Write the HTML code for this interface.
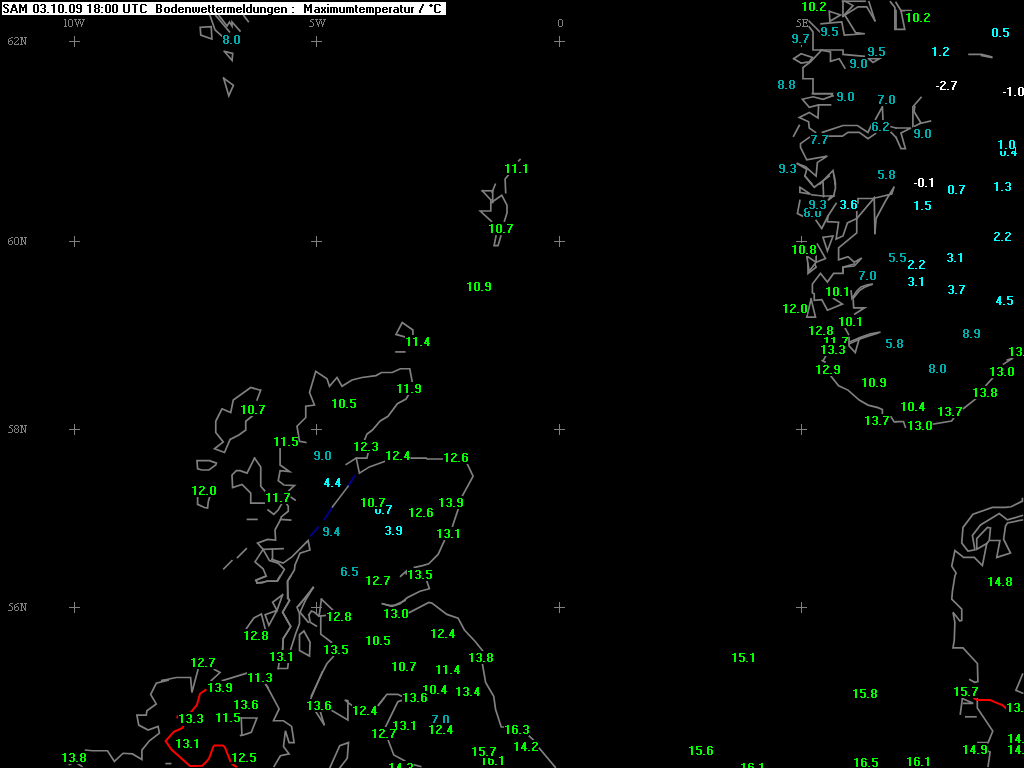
<!DOCTYPE html>
<html><head><meta charset="utf-8"><style>
html,body{margin:0;padding:0;background:#000;width:1024px;height:768px;overflow:hidden}
svg{display:block;will-change:transform}
.c{fill:none;stroke:#808080;stroke-width:1.7;stroke-linejoin:miter;stroke-linecap:square}
.g{font-family:"Liberation Sans",sans-serif;font-weight:bold;font-size:12px;letter-spacing:0.5px;fill:#00ff00}
.t{font-family:"Liberation Sans",sans-serif;font-weight:bold;font-size:12px;letter-spacing:0.5px;fill:#10b4b4}
.y{font-family:"Liberation Sans",sans-serif;font-weight:bold;font-size:12px;letter-spacing:0.5px;fill:#00ffff}
.w{font-family:"Liberation Sans",sans-serif;font-weight:bold;font-size:12px;letter-spacing:0.5px;fill:#ffffff}
.lab{font-family:"Liberation Serif",serif;font-size:11px;fill:#8c8c8c}
</style></head><body>
<svg width="1024" height="768" viewBox="0 0 1024 768">
<rect x="0" y="0" width="1024" height="768" fill="#000"/>

<rect x="2" y="2" width="444" height="13" fill="#fff"/>
<defs><path id="g0" d="M1,0h4v1h-4zM0,1h2v1h-2zM4,1h2v1h-2zM0,2h2v1h-2zM4,2h2v1h-2zM0,3h2v1h-2zM4,3h2v1h-2zM0,4h2v1h-2zM4,4h2v1h-2zM0,5h2v1h-2zM4,5h2v1h-2zM0,6h2v1h-2zM4,6h2v1h-2zM0,7h2v1h-2zM4,7h2v1h-2zM1,8h4v1h-4z"/><path id="g1" d="M2,0h2v1h-2zM0,1h4v1h-4zM2,2h2v1h-2zM2,3h2v1h-2zM2,4h2v1h-2zM2,5h2v1h-2zM2,6h2v1h-2zM2,7h2v1h-2zM2,8h2v1h-2z"/><path id="g2" d="M1,0h4v1h-4zM0,1h2v1h-2zM4,1h2v1h-2zM4,2h2v1h-2zM3,3h2v1h-2zM2,4h2v1h-2zM1,5h2v1h-2zM0,6h2v1h-2zM0,7h2v1h-2zM0,8h6v1h-6z"/><path id="g3" d="M1,0h4v1h-4zM0,1h2v1h-2zM4,1h2v1h-2zM4,2h2v1h-2zM4,3h2v1h-2zM2,4h3v1h-3zM4,5h2v1h-2zM4,6h2v1h-2zM0,7h2v1h-2zM4,7h2v1h-2zM1,8h4v1h-4z"/><path id="g4" d="M3,0h2v1h-2zM2,1h3v1h-3zM2,2h3v1h-3zM1,3h4v1h-4zM1,4h4v1h-4zM0,5h2v1h-2zM3,5h2v1h-2zM0,6h6v1h-6zM3,7h2v1h-2zM3,8h2v1h-2z"/><path id="g5" d="M0,0h6v1h-6zM0,1h2v1h-2zM0,2h2v1h-2zM0,3h5v1h-5zM4,4h2v1h-2zM4,5h2v1h-2zM4,6h2v1h-2zM0,7h2v1h-2zM4,7h2v1h-2zM1,8h4v1h-4z"/><path id="g6" d="M1,0h4v1h-4zM0,1h2v1h-2zM4,1h2v1h-2zM0,2h2v1h-2zM0,3h5v1h-5zM0,4h2v1h-2zM4,4h2v1h-2zM0,5h2v1h-2zM4,5h2v1h-2zM0,6h2v1h-2zM4,6h2v1h-2zM0,7h2v1h-2zM4,7h2v1h-2zM1,8h4v1h-4z"/><path id="g7" d="M0,0h6v1h-6zM4,1h2v1h-2zM3,2h2v1h-2zM3,3h2v1h-2zM2,4h2v1h-2zM2,5h2v1h-2zM1,6h2v1h-2zM1,7h2v1h-2zM1,8h2v1h-2z"/><path id="g8" d="M1,0h4v1h-4zM0,1h2v1h-2zM4,1h2v1h-2zM0,2h2v1h-2zM4,2h2v1h-2zM0,3h2v1h-2zM4,3h2v1h-2zM1,4h4v1h-4zM0,5h2v1h-2zM4,5h2v1h-2zM0,6h2v1h-2zM4,6h2v1h-2zM0,7h2v1h-2zM4,7h2v1h-2zM1,8h4v1h-4z"/><path id="g9" d="M1,0h4v1h-4zM0,1h2v1h-2zM4,1h2v1h-2zM0,2h2v1h-2zM4,2h2v1h-2zM0,3h2v1h-2zM4,3h2v1h-2zM1,4h5v1h-5zM4,5h2v1h-2zM4,6h2v1h-2zM0,7h2v1h-2zM4,7h2v1h-2zM1,8h4v1h-4z"/><path id="gdot" d="M0,8h2v1h-2z"/><path id="gmin" d="M0,5h3v1h-3z"/></defs>
<defs><path id="tS" d="M1,0h4v1h-4zM0,1h2v1h-2zM4,1h2v1h-2zM0,2h2v1h-2zM1,3h3v1h-3zM2,4h3v1h-3zM4,5h2v1h-2zM4,6h2v1h-2zM0,7h2v1h-2zM4,7h2v1h-2zM1,8h4v1h-4z"/><path id="tA" d="M3,0h2v1h-2zM2,1h4v1h-4zM2,2h4v1h-4zM2,3h4v1h-4zM1,4h2v1h-2zM5,4h2v1h-2zM1,5h2v1h-2zM5,5h2v1h-2zM1,6h6v1h-6zM0,7h2v1h-2zM6,7h2v1h-2zM0,8h2v1h-2zM6,8h2v1h-2z"/><path id="tM" d="M0,0h2v1h-2zM6,0h2v1h-2zM0,1h3v1h-3zM5,1h3v1h-3zM0,2h3v1h-3zM5,2h3v1h-3zM0,3h8v1h-8zM0,4h2v1h-2zM3,4h2v1h-2zM6,4h2v1h-2zM0,5h2v1h-2zM3,5h2v1h-2zM6,5h2v1h-2zM0,6h2v1h-2zM3,6h2v1h-2zM6,6h2v1h-2zM0,7h2v1h-2zM6,7h2v1h-2zM0,8h2v1h-2zM6,8h2v1h-2z"/><path id="tU" d="M0,0h2v1h-2zM5,0h2v1h-2zM0,1h2v1h-2zM5,1h2v1h-2zM0,2h2v1h-2zM5,2h2v1h-2zM0,3h2v1h-2zM5,3h2v1h-2zM0,4h2v1h-2zM5,4h2v1h-2zM0,5h2v1h-2zM5,5h2v1h-2zM0,6h2v1h-2zM5,6h2v1h-2zM0,7h2v1h-2zM5,7h2v1h-2zM1,8h5v1h-5z"/><path id="tT" d="M0,0h6v1h-6zM2,1h2v1h-2zM2,2h2v1h-2zM2,3h2v1h-2zM2,4h2v1h-2zM2,5h2v1h-2zM2,6h2v1h-2zM2,7h2v1h-2zM2,8h2v1h-2z"/><path id="tC" d="M1,0h5v1h-5zM0,1h2v1h-2zM5,1h2v1h-2zM0,2h2v1h-2zM0,3h2v1h-2zM0,4h2v1h-2zM0,5h2v1h-2zM0,6h2v1h-2zM0,7h2v1h-2zM5,7h2v1h-2zM1,8h5v1h-5z"/><path id="tB" d="M0,0h5v1h-5zM0,1h2v1h-2zM4,1h2v1h-2zM0,2h2v1h-2zM4,2h2v1h-2zM0,3h2v1h-2zM4,3h2v1h-2zM0,4h5v1h-5zM0,5h2v1h-2zM4,5h2v1h-2zM0,6h2v1h-2zM4,6h2v1h-2zM0,7h2v1h-2zM4,7h2v1h-2zM0,8h5v1h-5z"/><path id="to" d="M1,3h4v1h-4zM0,4h2v1h-2zM4,4h2v1h-2zM0,5h2v1h-2zM4,5h2v1h-2zM0,6h2v1h-2zM4,6h2v1h-2zM0,7h2v1h-2zM4,7h2v1h-2zM1,8h4v1h-4z"/><path id="td" d="M4,0h2v1h-2zM4,1h2v1h-2zM4,2h2v1h-2zM1,3h5v1h-5zM0,4h2v1h-2zM4,4h2v1h-2zM0,5h2v1h-2zM4,5h2v1h-2zM0,6h2v1h-2zM4,6h2v1h-2zM0,7h2v1h-2zM4,7h2v1h-2zM1,8h5v1h-5z"/><path id="te" d="M1,3h4v1h-4zM0,4h2v1h-2zM4,4h2v1h-2zM0,5h6v1h-6zM0,6h2v1h-2zM0,7h2v1h-2zM4,7h2v1h-2zM1,8h4v1h-4z"/><path id="tn" d="M0,3h5v1h-5zM0,4h2v1h-2zM4,4h2v1h-2zM0,5h2v1h-2zM4,5h2v1h-2zM0,6h2v1h-2zM4,6h2v1h-2zM0,7h2v1h-2zM4,7h2v1h-2zM0,8h2v1h-2zM4,8h2v1h-2z"/><path id="tw" d="M0,3h2v1h-2zM3,3h2v1h-2zM6,3h2v1h-2zM0,4h2v1h-2zM3,4h2v1h-2zM6,4h2v1h-2zM0,5h2v1h-2zM3,5h2v1h-2zM6,5h2v1h-2zM0,6h2v1h-2zM3,6h2v1h-2zM6,6h2v1h-2zM0,7h2v1h-2zM3,7h2v1h-2zM6,7h2v1h-2zM1,8h2v1h-2zM5,8h2v1h-2z"/><path id="tt" d="M0,1h2v1h-2zM0,2h2v1h-2zM0,3h3v1h-3zM0,4h2v1h-2zM0,5h2v1h-2zM0,6h2v1h-2zM0,7h2v1h-2zM1,8h2v1h-2z"/><path id="tr" d="M0,3h3v1h-3zM0,4h2v1h-2zM0,5h2v1h-2zM0,6h2v1h-2zM0,7h2v1h-2zM0,8h2v1h-2z"/><path id="tm" d="M0,3h7v1h-7zM0,4h2v1h-2zM3,4h2v1h-2zM6,4h2v1h-2zM0,5h2v1h-2zM3,5h2v1h-2zM6,5h2v1h-2zM0,6h2v1h-2zM3,6h2v1h-2zM6,6h2v1h-2zM0,7h2v1h-2zM3,7h2v1h-2zM6,7h2v1h-2zM0,8h2v1h-2zM3,8h2v1h-2zM6,8h2v1h-2z"/><path id="tl" d="M0,0h2v1h-2zM0,1h2v1h-2zM0,2h2v1h-2zM0,3h2v1h-2zM0,4h2v1h-2zM0,5h2v1h-2zM0,6h2v1h-2zM0,7h2v1h-2zM0,8h2v1h-2z"/><path id="tu" d="M0,3h2v1h-2zM4,3h2v1h-2zM0,4h2v1h-2zM4,4h2v1h-2zM0,5h2v1h-2zM4,5h2v1h-2zM0,6h2v1h-2zM4,6h2v1h-2zM0,7h2v1h-2zM4,7h2v1h-2zM1,8h5v1h-5z"/><path id="tg" d="M1,3h5v1h-5zM0,4h2v1h-2zM4,4h2v1h-2zM0,5h2v1h-2zM4,5h2v1h-2zM0,6h2v1h-2zM4,6h2v1h-2zM0,7h2v1h-2zM4,7h2v1h-2zM1,8h5v1h-5zM4,9h2v1h-2zM1,10h4v1h-4z"/><path id="ta" d="M1,3h4v1h-4zM4,4h2v1h-2zM1,5h5v1h-5zM0,6h2v1h-2zM4,6h2v1h-2zM0,7h2v1h-2zM4,7h2v1h-2zM1,8h5v1h-5z"/><path id="tx" d="M0,3h2v1h-2zM3,3h2v1h-2zM0,4h2v1h-2zM3,4h2v1h-2zM1,5h3v1h-3zM1,6h3v1h-3zM0,7h2v1h-2zM3,7h2v1h-2zM0,8h2v1h-2zM3,8h2v1h-2z"/><path id="ti" d="M0,0h2v1h-2zM0,3h2v1h-2zM0,4h2v1h-2zM0,5h2v1h-2zM0,6h2v1h-2zM0,7h2v1h-2zM0,8h2v1h-2z"/><path id="tp" d="M0,3h5v1h-5zM0,4h2v1h-2zM4,4h2v1h-2zM0,5h2v1h-2zM4,5h2v1h-2zM0,6h2v1h-2zM4,6h2v1h-2zM0,7h2v1h-2zM4,7h2v1h-2zM0,8h5v1h-5zM0,9h2v1h-2zM0,10h2v1h-2z"/><path id="tcol" d="M0,3h2v1h-2zM0,8h2v1h-2z"/><path id="tsl" d="M3,0h2v1h-2zM3,1h2v1h-2zM2,2h2v1h-2zM2,3h2v1h-2zM1,4h2v1h-2zM1,5h2v1h-2zM0,6h2v1h-2zM0,7h2v1h-2zM0,8h2v1h-2z"/><path id="tdeg" d="M1,0h2v1h-2zM0,1h4v1h-4zM1,2h2v1h-2z"/></defs>
<g fill="#000"><use href="#tS" x="3" y="4"/><use href="#tA" x="10" y="4"/><use href="#tM" x="19" y="4"/><use href="#g0" x="33" y="4"/><use href="#g3" x="40" y="4"/><use href="#gdot" x="47" y="4"/><use href="#g1" x="51" y="4"/><use href="#g0" x="58" y="4"/><use href="#gdot" x="65" y="4"/><use href="#g0" x="69" y="4"/><use href="#g9" x="76" y="4"/><use href="#g1" x="87" y="4"/><use href="#g8" x="94" y="4"/><use href="#tcol" x="101" y="4"/><use href="#g0" x="105" y="4"/><use href="#g0" x="112" y="4"/><use href="#tU" x="123" y="4"/><use href="#tT" x="132" y="4"/><use href="#tC" x="140" y="4"/><use href="#tB" x="156" y="4"/><use href="#to" x="164" y="4"/><use href="#td" x="171" y="4"/><use href="#te" x="178" y="4"/><use href="#tn" x="185" y="4"/><use href="#tw" x="192" y="4"/><use href="#te" x="201" y="4"/><use href="#tt" x="208" y="4"/><use href="#tt" x="212" y="4"/><use href="#te" x="216" y="4"/><use href="#tr" x="223" y="4"/><use href="#tm" x="227" y="4"/><use href="#te" x="236" y="4"/><use href="#tl" x="243" y="4"/><use href="#td" x="246" y="4"/><use href="#tu" x="253" y="4"/><use href="#tn" x="260" y="4"/><use href="#tg" x="267" y="4"/><use href="#te" x="274" y="4"/><use href="#tn" x="281" y="4"/><use href="#tcol" x="292" y="4"/><use href="#tM" x="304" y="4"/><use href="#ta" x="314" y="4"/><use href="#tx" x="321" y="4"/><use href="#ti" x="327" y="4"/><use href="#tm" x="330" y="4"/><use href="#tu" x="339" y="4"/><use href="#tm" x="346" y="4"/><use href="#tt" x="355" y="4"/><use href="#te" x="359" y="4"/><use href="#tm" x="366" y="4"/><use href="#tp" x="375" y="4"/><use href="#te" x="382" y="4"/><use href="#tr" x="389" y="4"/><use href="#ta" x="393" y="4"/><use href="#tt" x="400" y="4"/><use href="#tu" x="404" y="4"/><use href="#tr" x="411" y="4"/><use href="#tsl" x="419" y="4"/><use href="#tdeg" x="429" y="4"/><use href="#tC" x="434" y="4"/></g>
<path d="M69,41.5h11M74.5,36v11M69,241.5h11M74.5,236v11M69,429.5h11M74.5,424v11M69,607.5h11M74.5,602v11M311,41.5h11M316.5,36v11M311,241.5h11M316.5,236v11M311,429.5h11M316.5,424v11M311,607.5h11M316.5,602v11M554,41.5h11M559.5,36v11M554,241.5h11M559.5,236v11M554,429.5h11M559.5,424v11M554,607.5h11M559.5,602v11M796,41.5h11M801.5,36v11M796,241.5h11M801.5,236v11M796,429.5h11M801.5,424v11M796,607.5h11M801.5,602v11" stroke="#808080" stroke-width="1" fill="none"/>
<defs><path id="l6" d="M3,0h2v1h-2zM1,1h2v1h-2zM0,2h1v1h-1zM0,3h1v1h-1zM2,3h2v1h-2zM0,4h2v1h-2zM4,4h1v1h-1zM0,5h1v1h-1zM4,5h1v1h-1zM0,6h1v1h-1zM4,6h1v1h-1zM1,7h3v1h-3z"/><path id="l2" d="M1,0h3v1h-3zM0,1h1v1h-1zM4,1h1v1h-1zM4,2h1v1h-1zM3,3h1v1h-1zM2,4h1v1h-1zM1,5h1v1h-1zM0,6h1v1h-1zM4,6h1v1h-1zM0,7h5v1h-5z"/><path id="lN" d="M0,0h3v1h-3zM4,0h3v1h-3zM1,1h2v1h-2zM5,1h1v1h-1zM1,2h2v1h-2zM5,2h1v1h-1zM1,3h1v1h-1zM3,3h1v1h-1zM5,3h1v1h-1zM1,4h1v1h-1zM3,4h1v1h-1zM5,4h1v1h-1zM1,5h1v1h-1zM4,5h2v1h-2zM1,6h1v1h-1zM4,6h2v1h-2zM0,7h3v1h-3zM5,7h1v1h-1z"/><path id="l5" d="M2,0h3v1h-3zM1,1h1v1h-1zM1,2h2v1h-2zM3,3h1v1h-1zM4,4h1v1h-1zM4,5h1v1h-1zM4,6h1v1h-1zM0,7h4v1h-4z"/><path id="l8" d="M1,0h3v1h-3zM0,1h1v1h-1zM4,1h1v1h-1zM0,2h1v1h-1zM4,2h1v1h-1zM1,3h1v1h-1zM3,3h1v1h-1zM0,4h1v1h-1zM2,4h1v1h-1zM4,4h1v1h-1zM0,5h1v1h-1zM4,5h1v1h-1zM0,6h1v1h-1zM4,6h1v1h-1zM1,7h3v1h-3z"/><path id="l0" d="M1,0h3v1h-3zM0,1h1v1h-1zM4,1h1v1h-1zM0,2h1v1h-1zM4,2h1v1h-1zM0,3h1v1h-1zM4,3h1v1h-1zM0,4h1v1h-1zM4,4h1v1h-1zM0,5h1v1h-1zM4,5h1v1h-1zM0,6h1v1h-1zM4,6h1v1h-1zM1,7h3v1h-3z"/><path id="l1" d="M0,0h2v1h-2zM1,1h1v1h-1zM1,2h1v1h-1zM1,3h1v1h-1zM1,4h1v1h-1zM1,5h1v1h-1zM1,6h1v1h-1zM0,7h3v1h-3z"/><path id="lW" d="M0,0h3v1h-3zM4,0h3v1h-3zM8,0h3v1h-3zM1,1h1v1h-1zM5,1h1v1h-1zM9,1h1v1h-1zM1,2h1v1h-1zM4,2h1v1h-1zM6,2h1v1h-1zM9,2h1v1h-1zM2,3h1v1h-1zM4,3h1v1h-1zM6,3h1v1h-1zM8,3h1v1h-1zM2,4h1v1h-1zM4,4h1v1h-1zM6,4h1v1h-1zM8,4h1v1h-1zM2,5h2v1h-2zM7,5h2v1h-2zM3,6h1v1h-1zM7,6h1v1h-1zM3,7h1v1h-1zM7,7h1v1h-1z"/><path id="lE" d="M0,0h6v1h-6zM1,1h1v1h-1zM5,1h1v1h-1zM1,2h1v1h-1zM4,2h1v1h-1zM1,3h4v1h-4zM1,4h1v1h-1zM4,4h1v1h-1zM1,5h1v1h-1zM1,6h1v1h-1zM5,6h1v1h-1zM0,7h6v1h-6z"/></defs>
<g fill="#808080"><use href="#l6" x="8" y="37"/><use href="#l2" x="14" y="37"/><use href="#lN" x="20" y="37"/><use href="#l6" x="8" y="237"/><use href="#l0" x="14" y="237"/><use href="#lN" x="20" y="237"/><use href="#l5" x="8" y="425"/><use href="#l8" x="14" y="425"/><use href="#lN" x="20" y="425"/><use href="#l5" x="8" y="603"/><use href="#l6" x="14" y="603"/><use href="#lN" x="20" y="603"/><use href="#l1" x="64" y="19"/><use href="#l0" x="68" y="19"/><use href="#lW" x="74" y="19"/><use href="#l5" x="309" y="19"/><use href="#lW" x="315" y="19"/><use href="#l0" x="558" y="19"/><use href="#l5" x="796" y="19"/><use href="#lE" x="802" y="19"/></g>
<polyline class="c" points="200.2,27.3 211.2,26.7 211.9,39 200.8,35.1 200.2,27.3"/>
<polyline class="c" points="224.3,51.4 232.7,53.4 232.1,60.5 224.3,51.4"/>
<polyline class="c" points="223.6,78.1 233.4,85.3 228.8,95.7 223.6,78.1"/>
<polyline class="c" points="210,15.6 215.1,30 221.6,35.8"/>
<polyline class="c" points="215.8,15.6 229.5,31.9"/>
<polyline class="c" points="219,15.6 227,26 229.5,22 232,26 232,22 240,31"/>
<polyline class="c" points="243.8,15.6 248.3,21.5"/>
<polyline class="c" points="518.7,160.8 520,159.5"/>
<polyline class="c" points="508.3,175.1 505.1,179 505.7,192.7"/>
<polyline class="c" points="495.3,184.3 492.1,192.1"/>
<polyline class="c" points="482.3,190.8 492.7,190.8"/>
<polyline class="c" points="482.3,190.8 490.8,199.9"/>
<polyline class="c" points="492.7,192.1 492.7,202.5"/>
<polyline class="c" points="491.4,202.5 501.8,195.3 507,205.1 507,212.9 504.4,221.3"/>
<polyline class="c" points="490.8,199.9 490.8,211 480.3,211 491.4,221.3"/>
<polyline class="c" points="496,236 494.1,245.7 498,245.7 500.9,236"/>
<polyline class="c" points="404.75,336.9 396,334.4 402.25,322.5 412.9,330 412.9,335"/>
<polyline class="c" points="396,351.9 404.75,351.9"/>
<polyline class="c" points="259.5,390 250.75,387.5 233.25,400 230.75,412.5 222,408.75 215.75,421.25 215.75,432.5 223.25,441.9 214.5,448.75 224.5,452.5 230.1,439.4 238.9,435 245.75,430 245.75,421.25 252,416.25"/>
<polyline class="c" points="257,400 260.75,390"/>
<polyline class="c" points="197,460.6 209.5,460.6 216.4,463.1 215.75,465 208.9,470 202,470 197.6,468.75 197,460.6"/>
<polyline class="c" points="197.6,497.5 197.6,504.4 204.5,507.5 207.6,508.1 208.25,501.9 209.5,497.5"/>
<polyline class="c" points="254.5,458.1 247,473.1 240.1,470.6 236.4,470.6 232,475 232.6,487.5 242,484.4 250.75,493.1 250.75,503.1 264.5,503.1"/>
<polyline class="c" points="254.5,458.1 260.75,466.9 260.75,486.25 265.1,491.25"/>
<polyline class="c" points="280.1,448.1 280.1,465 289.5,471.5 280.1,470.6 278.25,480.6 283.9,485 294.5,485.6 288.9,490.6"/>
<polyline class="c" points="291.4,497.5 295.1,500"/>
<polyline class="c" points="268.1,510 273.75,514.4 278.1,510 281.4,504.4"/>
<polyline class="c" points="287,504.4 288.25,506.25 288.25,511.25 281.25,516.9 280.6,519.4 275,530 275.6,540 267.5,539.4 257.5,543.1 263.1,549.4 283.1,548.75"/>
<polyline class="c" points="280.6,519.4 290.6,520"/>
<polyline class="c" points="272.5,549.4 272.5,559.4"/>
<polyline class="c" points="263.1,549.4 255,561.9 263.1,568.75 266.25,576.25 256.25,580 256.9,583.1 267.5,581.25 277.5,581.25 284.4,569.4 278.1,563.1 269.4,560.6 263.1,549.4"/>
<polyline class="c" points="271.9,559.4 283.1,563.1 291.9,556.9 308.1,540.6 310,550 300,553.1 295,565 294.4,570 287.5,581.25 288.1,597.5 289.5,600.4 282.6,612.25 290.75,626.6 283.25,638.5 282.6,649.75"/>
<polyline class="c" points="247.5,519.4 256.9,519.4"/>
<polyline class="c" points="237.5,557.5 246.25,548.75"/>
<polyline class="c" points="223.75,568.75 231.9,560.6"/>
<polyline class="c" points="305.75,442.5 299.5,441.25 297,426.25 305.75,417.5 305.75,406.25 314.5,405 309.5,392.5 315.75,371.25 327,378.75 329.5,386.25 337,377.5 342,386.25 352,380 362,377.5 376,375.6 381.6,372.5 392.25,372.5 400.4,368.75 409.75,368.75 412.25,381.9"/>
<polyline class="c" points="408.3,395.2 406,399 397.4,403.75 388,416.25 380.2,421 372.4,430 367,434 364.5,440"/>
<polyline class="c" points="346.25,464.4 356.25,458.1 366.9,458.1 368.1,453.1"/>
<polyline class="c" points="356.25,458.1 359.4,473.1 369.4,466.9 385,461.25"/>
<polyline class="c" points="411.25,458.1 426.25,458.1 426.9,459 442.5,459"/>
<polyline class="c" points="467.5,464.4 473.1,476.25 462.5,495.6"/>
<polyline class="c" points="458.1,509.4 452.5,526.25"/>
<polyline class="c" points="444.4,540.6 438.1,554.4 428.75,563.75 422.5,565.6 414.4,567.5"/>
<polyline class="c" points="400.6,576.25 406.9,570.6 406.25,573.75"/>
<polyline class="c" points="426.9,581.25 429.4,588.75 420,591.25 407.5,597.5 400,603.75 391.9,606.25 382.5,603.75"/>
<polyline class="c" points="382.5,603.75 390,605.6 395,605 405,600.6"/>
<polyline class="c" points="409.4,612.5 428.75,602.5 431.9,603.1 446.9,614.4 458.1,618.1 464.4,630 475,641.25 482.5,650.6"/>
<polyline class="c" points="482.5,664.4 485.6,682.5 493.75,696.4 495.6,709.5 501.25,727 503.75,727"/>
<polyline class="c" points="528.75,735.75 533.1,739.5"/>
<polyline class="c" points="539.4,748.25 555.25,767.25"/>
<polyline class="c" points="256.4,580.4 257,582.9 262,582.9 267,581 277,581 280.1,576"/>
<polyline class="c" points="255.75,580.4 265.75,576"/>
<polyline class="c" points="290.75,576 287.6,581 287.6,598.5 289.5,600.4 282.6,612.25 290.75,626.6 283.25,638.5 282.6,649.75"/>
<polyline class="c" points="282.6,594.75 272.6,602.25 277,610.4 282.6,594.75"/>
<polyline class="c" points="277,610.4 265.1,614.75 268.9,625.4 277,610.4"/>
<polyline class="c" points="246.4,628.5 253.9,617.9 261.4,614.1 265.1,628.5"/>
<polyline class="c" points="313.25,587.9 304.5,598.5 297,607.25 299.5,613.5 299.5,623.5 295.75,633.5 290.75,649.1"/>
<polyline class="c" points="313.1,587.5 305.75,599.75 300.1,612.25 308.25,622.25"/>
<polyline class="c" points="308.9,614.75 311.4,611 314.5,612.25 318.9,616 325.75,615.4"/>
<polyline class="c" points="308.9,614.75 310.1,622.25 316.4,626"/>
<polyline class="c" points="321.4,599.1 332.6,609.75"/>
<polyline class="c" points="321.4,599.1 319.5,613.5 318.9,616"/>
<polyline class="c" points="320.75,616 320.75,634.1 331.4,642.25"/>
<polyline class="c" points="303.9,631 299.5,634.75 299.5,650.4 309.5,656 310.1,642.25 303.9,631"/>
<polyline class="c" points="278.25,668.5 287.6,668.5 288.25,663.5"/>
<polyline class="c" points="279,663.5 278.25,668.5"/>
<polyline class="c" points="333.25,656.6 327,663.5 322.6,672 311.25,696"/>
<polyline class="c" points="298.75,606 313.1,587.5"/>
<polyline class="c" points="168,680.1 156.25,683.25 150.6,694.5 156.25,703.9 146.9,710.75 146.25,715.1 136.9,715.1 138.75,725.1 148.1,730.1 158.1,726.4 159.4,733.25 149.4,740.75 141.9,750.1 141.9,759.5 132.5,753.9 123.1,753.25 114.4,761.4 107.5,750.75 92.5,750.75 85.6,750.1"/>
<polyline class="c" points="161.9,680.6 176.25,677.5 190.6,677.5 191.9,692.5 198.1,669.4"/>
<polyline class="c" points="168,680.1 161.9,680.6"/>
<polyline class="c" points="214.4,669.4 220,672.5 211.25,680.6"/>
<polyline class="c" points="222.5,680.6 246.9,673.1"/>
<polyline class="c" points="265.6,684.4 268,687.5"/>
<polyline class="c" points="241.25,718 256.9,718 251.25,732.4 243.75,734.9 240.6,735.5"/>
<polyline class="c" points="241.25,718 241.9,734.9"/>
<polyline class="c" points="166.25,763.6 170.6,763.6"/>
<polyline class="c" points="69.4,764.5 75,762 81.9,766.4"/>
<polyline class="c" points="266,684.5 279.1,708.9 273.5,720.75 283.5,720.75 291.6,726.4 294.1,742.6 289.1,742.6 285.4,730.75 283.5,746.4 289.1,753.9 280.4,755.75 274.1,766.4"/>
<polyline class="c" points="322.25,672 311,698.25"/>
<polyline class="c" points="316,712 324.1,724.5"/>
<polyline class="c" points="320.4,712 324.1,724.5"/>
<polyline class="c" points="332.25,710.75 347.9,720.1 347.9,700.75 344.75,700.1 351.6,705.1"/>
<polyline class="c" points="378.5,705.1 384,698.25"/>
<polyline class="c" points="329.75,768 339.75,745.75 348.5,742.6 347.25,758.25 339.75,768"/>
<polyline class="c" points="378.3,705.2 386.9,694.3 397.8,694.3 401.2,696"/>
<polyline class="c" points="401.2,700.6 397.8,701.8 385.8,726.4"/>
<polyline class="c" points="388.1,740.1 393.8,755 404.7,760.8"/>
<polyline class="c" points="414.4,764.8 420.7,766.5"/>
<polyline class="c" points="829.25,11.25 840.5,15 829.9,21.25 829.25,11.25"/>
<polyline class="c" points="842.5,1.25 865,1.25"/>
<polyline class="c" points="845,1.25 853,5.6 843,16.25"/>
<polyline class="c" points="843,1.25 843,16.25"/>
<polyline class="c" points="843,16.25 858,6.9 866.75,6.9 874.9,20.6"/>
<polyline class="c" points="869,1.9 874.9,20.6"/>
<polyline class="c" points="845.5,16.25 855.5,32.5 864.9,33.75 844.25,35 841.75,21.9 821.1,23.75"/>
<polyline class="c" points="890.5,1.9 894.9,7.5 894.9,29.4"/>
<polyline class="c" points="809.25,21.25 819.9,31.9"/>
<polyline class="c" points="809.25,26.9 813,31.9 813,50 843,50 843,54.4 864.25,56.25"/>
<polyline class="c" points="820.5,50 830.5,51.9 830.5,61.25 839.25,58.75 844.9,68.1"/>
<polyline class="c" points="793.6,58.75 801.1,53.75 812.4,57.5 809.25,61.9 801.1,63.1 793.6,58.75"/>
<polyline class="c" points="821.1,50.6 810.5,61.9 803,67.5 803,78.75 813,78.75 813,93.75 831.75,93.75 833,96"/>
<polyline class="c" points="868.6,58.75 879.25,58.75 873,62.5 868.6,58.75"/>
<polyline class="c" points="896,2.5 901,10.6 911,10.6"/>
<polyline class="c" points="896,10.6 896,29.4 904.75,29.4 901,10.6"/>
<polyline class="c" points="969.1,54.4 981.6,54.4 991.6,56.9"/>
<polyline class="c" points="981.6,55.6 991.6,57.6"/>
<polyline class="c" points="812.4,93.6 832.4,93.6 831.75,96.1 823,99.25 813,96.75 802.4,99.25 809.25,107.4 818.6,104.9 830.5,104.9"/>
<polyline class="c" points="818.6,104.9 818,118 809.25,112.4 799.25,117.4 808.6,121.75 809.25,128 815.5,132.4"/>
<polyline class="c" points="799.25,125.5 793.6,136.1"/>
<polyline class="c" points="809.25,137.4 800.5,143.6 800.5,147.4 806.75,159.9 827.4,156.1 817.4,162.4 816.1,176.1 805.5,166.75 797.4,163.6"/>
<polyline class="c" points="797.4,163.6 806.75,169.25 804.9,176.1 811.75,184"/>
<polyline class="c" points="822.4,132.4 843,125.5 857.4,125.5 868,132.4 871.75,124.25"/>
<polyline class="c" points="829.25,136.1 842.4,136.1 848,132.4 859.25,132.4 868,138.6 875.5,133.6"/>
<polyline class="c" points="875.5,119.25 882.4,106.75 883,119.9"/>
<polyline class="c" points="891.1,126.75 896,128"/>
<polyline class="c" points="891.1,132.4 896,137.4"/>
<polyline class="c" points="819.9,184 833,170.5 835.5,184"/>
<polyline class="c" points="921,97.4 912.9,106.75 912.9,126.75"/>
<polyline class="c" points="914.75,106.75 914.1,111.75 921,123 914.75,126.1"/>
<polyline class="c" points="919.75,123.6 930.4,121.1"/>
<polyline class="c" points="896,128 911,128 901,133 905.4,148.6 901,148.6 896,137.4"/>
<polyline class="c" points="804.9,176 814.25,187.25 829.25,176"/>
<polyline class="c" points="823,182.25 823.6,196.6"/>
<polyline class="c" points="834.25,176 835.5,187.9 833.6,196 828,200.4 831,196"/>
<polyline class="c" points="799.9,187.25 810.5,194.1 799.9,192.25 799.9,187.25"/>
<polyline class="c" points="811.75,194.75 823,196 834.25,196"/>
<polyline class="c" points="799.9,200.4 797.4,213.5 802.4,216"/>
<polyline class="c" points="836.1,203.5 828,216 825.5,221 821.75,228.5 816.1,220.4"/>
<polyline class="c" points="828,216 827.4,221.6 838.6,222.25 836.1,239.1 843,236 847.4,222.9 856.75,218.5 856.75,232.9 838.6,247.9 838.6,259.75 848,256.6 854.25,262.25 861.75,257.9 854.25,266 843,267.25 843,272"/>
<polyline class="c" points="858,202.9 858,198.5 873,198.5 891.75,194.1 894.25,186.6 885.5,201 876.1,218.5 874.9,233.5"/>
<polyline class="c" points="857.4,217.9 874.25,197.9 874.9,232.9"/>
<polyline class="c" points="856.75,211.6 856.75,218.5"/>
<polyline class="c" points="823,237.25 833,236 827.4,251 823,237.25"/>
<polyline class="c" points="817.4,244.1 825.5,258.5 816.1,262.25 806.75,256 809.25,272"/>
<polyline class="c" points="816.1,256 816.1,262.25 810,270"/>
<polyline class="c" points="808,264 808,273.4 816.1,267.1 814.9,264"/>
<polyline class="c" points="854.25,264 843,267.1 843,273.4 833.6,273.4 827.4,282.1 820.5,273.4 812.4,284 812.4,292.75 814.25,294 814.25,300.25 821.75,299.6 827.4,310.25 842.4,304 833.6,298.4"/>
<polyline class="c" points="811.1,299 806.75,317.1 815.5,317.1 811.1,299"/>
<polyline class="c" points="872,284.3 867.25,284.8 861,286.9 856.8,291 852,298.4 851.1,290.9"/>
<polyline class="c" points="872,284.3 864.1,287.5 859.4,290.6 853.2,298.4"/>
<polyline class="c" points="853.2,300 853.7,307.8 864.6,307.8 854.75,314"/>
<polyline class="c" points="845.4,328.6 848.5,334.3"/>
<polyline class="c" points="849,337.5 849,345.8 855.3,352.6 859.4,338"/>
<polyline class="c" points="849.5,342 860.5,337.4 870.4,333.8 879.75,332.2"/>
<polyline class="c" points="849.5,343.7 860,339 867.25,336.4 877.7,333.3"/>
<polyline class="c" points="825.5,356.5 823.6,360 822.4,360.75 824.9,362"/>
<polyline class="c" points="1007.25,360 1012.25,358.4"/>
<polyline class="c" points="831.1,376.4 838.6,385.75 848,390.1 859.25,400.1 868,405.1 878,407.6 882.4,409.5 882.4,413.25"/>
<polyline class="c" points="891.1,417 894.25,422 896,422"/>
<polyline class="c" points="1003.5,364.1 1012.25,358.5"/>
<polyline class="c" points="986,385.4 992.25,378.5"/>
<polyline class="c" points="963.5,408.5 975.4,399.1"/>
<polyline class="c" points="933.5,424.1 951.6,421 953.5,418.5"/>
<polyline class="c" points="896,421.6 903.5,421.6 905.4,427.25"/>
<polyline class="c" points="1022.4,498.6 1022.4,501.1 1011.1,506.75 1005.5,507.4 992.4,507.4 973,514.25 963,527.4 961.75,543 968,551.1 974.9,549.9 972.4,535.5 980.5,524.9 999.25,513.6 1007.4,519.9 1022.4,515.5"/>
<polyline class="c" points="1022.4,519.9 1007.4,523 1005.5,526.1 1003.6,539.25 1010.5,553 996.75,557.4 999.9,540.5 989.25,540.5 990.5,528 987.4,527.4 976.75,538.6 976.75,549.25 986.75,543.6 989.25,540.5"/>
<polyline class="c" points="986.75,543.6 982.4,565.5 974.25,557.4 963.6,557.4 954.9,550.5 951.75,566.1 956.1,573 954.9,576 952.4,591.6 951.75,599.1 961.75,609.1 961.75,620.4 959.9,621 953,612.25 954.9,622.25 954.25,640.4 953,647.9 963,647.9 977.4,663.5 977.9,681.6 974.6,682.3 969.8,679.6"/>
<polyline class="c" points="977.3,698.5 977.3,708 992.8,731 988.1,742.6 977.9,742.6"/>
<polyline class="c" points="962.4,698.5 960.3,714.1"/>
<polyline class="c" points="962.4,698.5 973.2,703.3 963.7,703.3"/>
<polyline class="c" points="965.8,716.8 975.9,716.8"/>
<polyline class="c" points="988.8,751.4 990.1,752 988.1,766.3"/>
<polyline class="c" points="1022.6,674.2 1015.9,690.4 1022.6,693.1"/>
<polyline class="c" points="205.6,690 200,693.75 196.9,705 191.25,711.9" style="stroke:#ff0000;stroke-width:2"/>
<polyline class="c" points="177.5,716.5 177.5,717.5" style="stroke:#ff0000;stroke-width:2"/>
<polyline class="c" points="183.1,726.75 182.5,728 173.75,731.75 165.6,741.1 171.25,749.25 190,766.1 202.25,765.8 205.8,762.3 208.9,758.75 210.8,753.7 213.2,747 214.4,745.5 223,745.5 224.9,747.4 230.4,761.1" style="stroke:#ff0000;stroke-width:2"/>
<polyline class="c" points="232.3,764.2 236,766.6" style="stroke:#ff0000;stroke-width:2"/>
<polyline class="c" points="974.3,698.3 977.2,700 990.3,700 994.3,701.8 1002.4,705.2 1005.8,708" style="stroke:#ff0000;stroke-width:2"/>
<polyline class="c" points="354.4,476.25 348.1,486.25" style="stroke:#000088;stroke-width:2"/>
<polyline class="c" points="332.5,506.9 324.4,519.4" style="stroke:#000088;stroke-width:2"/>
<polyline class="c" points="318.1,527.5 310.6,535.6" style="stroke:#000088;stroke-width:2"/>
<polyline class="c" points="348.1,486.25 332.5,506.9" style="stroke:#808080;stroke-width:1.6"/>
<rect x="222" y="33" width="18" height="13" fill="#000"/>
<g fill="#00aaaa"><use href="#g8" x="223" y="35"/><use href="#gdot" x="230" y="35"/><use href="#g0" x="234" y="35"/></g>
<rect x="504" y="162" width="25" height="13" fill="#000"/>
<g fill="#00ff00"><use href="#g1" x="505" y="164"/><use href="#g1" x="512" y="164"/><use href="#gdot" x="519" y="164"/><use href="#g1" x="523" y="164"/></g>
<rect x="488" y="222" width="25" height="13" fill="#000"/>
<g fill="#00ff00"><use href="#g1" x="489" y="224"/><use href="#g0" x="496" y="224"/><use href="#gdot" x="503" y="224"/><use href="#g7" x="507" y="224"/></g>
<rect x="466" y="280" width="25" height="13" fill="#000"/>
<g fill="#00ff00"><use href="#g1" x="467" y="282"/><use href="#g0" x="474" y="282"/><use href="#gdot" x="481" y="282"/><use href="#g9" x="485" y="282"/></g>
<rect x="405" y="335" width="25" height="13" fill="#000"/>
<g fill="#00ff00"><use href="#g1" x="406" y="337"/><use href="#g1" x="413" y="337"/><use href="#gdot" x="420" y="337"/><use href="#g4" x="424" y="337"/></g>
<rect x="240" y="403" width="25" height="13" fill="#000"/>
<g fill="#00ff00"><use href="#g1" x="241" y="405"/><use href="#g0" x="248" y="405"/><use href="#gdot" x="255" y="405"/><use href="#g7" x="259" y="405"/></g>
<rect x="273" y="435" width="25" height="13" fill="#000"/>
<g fill="#00ff00"><use href="#g1" x="274" y="437"/><use href="#g1" x="281" y="437"/><use href="#gdot" x="288" y="437"/><use href="#g5" x="292" y="437"/></g>
<rect x="331" y="397" width="25" height="13" fill="#000"/>
<g fill="#00ff00"><use href="#g1" x="332" y="399"/><use href="#g0" x="339" y="399"/><use href="#gdot" x="346" y="399"/><use href="#g5" x="350" y="399"/></g>
<rect x="396" y="382" width="25" height="13" fill="#000"/>
<g fill="#00ff00"><use href="#g1" x="397" y="384"/><use href="#g1" x="404" y="384"/><use href="#gdot" x="411" y="384"/><use href="#g9" x="415" y="384"/></g>
<rect x="313" y="449" width="18" height="13" fill="#000"/>
<g fill="#00aaaa"><use href="#g9" x="314" y="451"/><use href="#gdot" x="321" y="451"/><use href="#g0" x="325" y="451"/></g>
<rect x="353" y="440" width="25" height="13" fill="#000"/>
<g fill="#00ff00"><use href="#g1" x="354" y="442"/><use href="#g2" x="361" y="442"/><use href="#gdot" x="368" y="442"/><use href="#g3" x="372" y="442"/></g>
<rect x="385" y="449" width="25" height="13" fill="#000"/>
<g fill="#00ff00"><use href="#g1" x="386" y="451"/><use href="#g2" x="393" y="451"/><use href="#gdot" x="400" y="451"/><use href="#g4" x="404" y="451"/></g>
<rect x="443" y="451" width="25" height="13" fill="#000"/>
<g fill="#00ff00"><use href="#g1" x="444" y="453"/><use href="#g2" x="451" y="453"/><use href="#gdot" x="458" y="453"/><use href="#g6" x="462" y="453"/></g>
<rect x="323" y="476" width="18" height="13" fill="#000"/>
<g fill="#00ffff"><use href="#g4" x="324" y="478"/><use href="#gdot" x="331" y="478"/><use href="#g4" x="335" y="478"/></g>
<rect x="191" y="484" width="25" height="13" fill="#000"/>
<g fill="#00ff00"><use href="#g1" x="192" y="486"/><use href="#g2" x="199" y="486"/><use href="#gdot" x="206" y="486"/><use href="#g0" x="210" y="486"/></g>
<rect x="265" y="491" width="25" height="13" fill="#000"/>
<g fill="#00ff00"><use href="#g1" x="266" y="493"/><use href="#g1" x="273" y="493"/><use href="#gdot" x="280" y="493"/><use href="#g7" x="284" y="493"/></g>
<rect x="374" y="503" width="18" height="13" fill="#000"/>
<g fill="#00ffff"><use href="#g0" x="375" y="505"/><use href="#gdot" x="382" y="505"/><use href="#g7" x="386" y="505"/></g>
<rect x="360" y="496" width="25" height="13" fill="#000"/>
<g fill="#00ff00"><use href="#g1" x="361" y="498"/><use href="#g0" x="368" y="498"/><use href="#gdot" x="375" y="498"/><use href="#g7" x="379" y="498"/></g>
<rect x="438" y="496" width="25" height="13" fill="#000"/>
<g fill="#00ff00"><use href="#g1" x="439" y="498"/><use href="#g3" x="446" y="498"/><use href="#gdot" x="453" y="498"/><use href="#g9" x="457" y="498"/></g>
<rect x="408" y="506" width="25" height="13" fill="#000"/>
<g fill="#00ff00"><use href="#g1" x="409" y="508"/><use href="#g2" x="416" y="508"/><use href="#gdot" x="423" y="508"/><use href="#g6" x="427" y="508"/></g>
<rect x="436" y="527" width="25" height="13" fill="#000"/>
<g fill="#00ff00"><use href="#g1" x="437" y="529"/><use href="#g3" x="444" y="529"/><use href="#gdot" x="451" y="529"/><use href="#g1" x="455" y="529"/></g>
<rect x="322" y="525" width="18" height="13" fill="#000"/>
<g fill="#00aaaa"><use href="#g9" x="323" y="527"/><use href="#gdot" x="330" y="527"/><use href="#g4" x="334" y="527"/></g>
<rect x="384" y="524" width="18" height="13" fill="#000"/>
<g fill="#00ffff"><use href="#g3" x="385" y="526"/><use href="#gdot" x="392" y="526"/><use href="#g9" x="396" y="526"/></g>
<rect x="340" y="565" width="18" height="13" fill="#000"/>
<g fill="#00aaaa"><use href="#g6" x="341" y="567"/><use href="#gdot" x="348" y="567"/><use href="#g5" x="352" y="567"/></g>
<rect x="365" y="574" width="25" height="13" fill="#000"/>
<g fill="#00ff00"><use href="#g1" x="366" y="576"/><use href="#g2" x="373" y="576"/><use href="#gdot" x="380" y="576"/><use href="#g7" x="384" y="576"/></g>
<rect x="407" y="568" width="25" height="13" fill="#000"/>
<g fill="#00ff00"><use href="#g1" x="408" y="570"/><use href="#g3" x="415" y="570"/><use href="#gdot" x="422" y="570"/><use href="#g5" x="426" y="570"/></g>
<rect x="326" y="610" width="25" height="13" fill="#000"/>
<g fill="#00ff00"><use href="#g1" x="327" y="612"/><use href="#g2" x="334" y="612"/><use href="#gdot" x="341" y="612"/><use href="#g8" x="345" y="612"/></g>
<rect x="383" y="607" width="25" height="13" fill="#000"/>
<g fill="#00ff00"><use href="#g1" x="384" y="609"/><use href="#g3" x="391" y="609"/><use href="#gdot" x="398" y="609"/><use href="#g0" x="402" y="609"/></g>
<rect x="430" y="627" width="25" height="13" fill="#000"/>
<g fill="#00ff00"><use href="#g1" x="431" y="629"/><use href="#g2" x="438" y="629"/><use href="#gdot" x="445" y="629"/><use href="#g4" x="449" y="629"/></g>
<rect x="365" y="634" width="25" height="13" fill="#000"/>
<g fill="#00ff00"><use href="#g1" x="366" y="636"/><use href="#g0" x="373" y="636"/><use href="#gdot" x="380" y="636"/><use href="#g5" x="384" y="636"/></g>
<rect x="323" y="643" width="25" height="13" fill="#000"/>
<g fill="#00ff00"><use href="#g1" x="324" y="645"/><use href="#g3" x="331" y="645"/><use href="#gdot" x="338" y="645"/><use href="#g5" x="342" y="645"/></g>
<rect x="243" y="629" width="25" height="13" fill="#000"/>
<g fill="#00ff00"><use href="#g1" x="244" y="631"/><use href="#g2" x="251" y="631"/><use href="#gdot" x="258" y="631"/><use href="#g8" x="262" y="631"/></g>
<rect x="190" y="656" width="25" height="13" fill="#000"/>
<g fill="#00ff00"><use href="#g1" x="191" y="658"/><use href="#g2" x="198" y="658"/><use href="#gdot" x="205" y="658"/><use href="#g7" x="209" y="658"/></g>
<rect x="269" y="650" width="25" height="13" fill="#000"/>
<g fill="#00ff00"><use href="#g1" x="270" y="652"/><use href="#g3" x="277" y="652"/><use href="#gdot" x="284" y="652"/><use href="#g1" x="288" y="652"/></g>
<rect x="391" y="660" width="25" height="13" fill="#000"/>
<g fill="#00ff00"><use href="#g1" x="392" y="662"/><use href="#g0" x="399" y="662"/><use href="#gdot" x="406" y="662"/><use href="#g7" x="410" y="662"/></g>
<rect x="468" y="651" width="25" height="13" fill="#000"/>
<g fill="#00ff00"><use href="#g1" x="469" y="653"/><use href="#g3" x="476" y="653"/><use href="#gdot" x="483" y="653"/><use href="#g8" x="487" y="653"/></g>
<rect x="435" y="663" width="25" height="13" fill="#000"/>
<g fill="#00ff00"><use href="#g1" x="436" y="665"/><use href="#g1" x="443" y="665"/><use href="#gdot" x="450" y="665"/><use href="#g4" x="454" y="665"/></g>
<rect x="247" y="671" width="25" height="13" fill="#000"/>
<g fill="#00ff00"><use href="#g1" x="248" y="673"/><use href="#g1" x="255" y="673"/><use href="#gdot" x="262" y="673"/><use href="#g3" x="266" y="673"/></g>
<rect x="207" y="681" width="25" height="13" fill="#000"/>
<g fill="#00ff00"><use href="#g1" x="208" y="683"/><use href="#g3" x="215" y="683"/><use href="#gdot" x="222" y="683"/><use href="#g9" x="226" y="683"/></g>
<rect x="422" y="683" width="25" height="13" fill="#000"/>
<g fill="#00ff00"><use href="#g1" x="423" y="685"/><use href="#g0" x="430" y="685"/><use href="#gdot" x="437" y="685"/><use href="#g4" x="441" y="685"/></g>
<rect x="455" y="685" width="25" height="13" fill="#000"/>
<g fill="#00ff00"><use href="#g1" x="456" y="687"/><use href="#g3" x="463" y="687"/><use href="#gdot" x="470" y="687"/><use href="#g4" x="474" y="687"/></g>
<rect x="233" y="698" width="25" height="13" fill="#000"/>
<g fill="#00ff00"><use href="#g1" x="234" y="700"/><use href="#g3" x="241" y="700"/><use href="#gdot" x="248" y="700"/><use href="#g6" x="252" y="700"/></g>
<rect x="178" y="712" width="25" height="13" fill="#000"/>
<g fill="#00ff00"><use href="#g1" x="179" y="714"/><use href="#g3" x="186" y="714"/><use href="#gdot" x="193" y="714"/><use href="#g3" x="197" y="714"/></g>
<rect x="215" y="711" width="25" height="13" fill="#000"/>
<g fill="#00ff00"><use href="#g1" x="216" y="713"/><use href="#g1" x="223" y="713"/><use href="#gdot" x="230" y="713"/><use href="#g5" x="234" y="713"/></g>
<rect x="431" y="713" width="18" height="13" fill="#000"/>
<g fill="#00aaaa"><use href="#g7" x="432" y="715"/><use href="#gdot" x="439" y="715"/><use href="#g0" x="443" y="715"/></g>
<rect x="428" y="723" width="25" height="13" fill="#000"/>
<g fill="#00ff00"><use href="#g1" x="429" y="725"/><use href="#g2" x="436" y="725"/><use href="#gdot" x="443" y="725"/><use href="#g4" x="447" y="725"/></g>
<rect x="504" y="723" width="25" height="13" fill="#000"/>
<g fill="#00ff00"><use href="#g1" x="505" y="725"/><use href="#g6" x="512" y="725"/><use href="#gdot" x="519" y="725"/><use href="#g3" x="523" y="725"/></g>
<rect x="513" y="740" width="25" height="13" fill="#000"/>
<g fill="#00ff00"><use href="#g1" x="514" y="742"/><use href="#g4" x="521" y="742"/><use href="#gdot" x="528" y="742"/><use href="#g2" x="532" y="742"/></g>
<rect x="480" y="754" width="25" height="13" fill="#000"/>
<g fill="#00ff00"><use href="#g1" x="481" y="756"/><use href="#g6" x="488" y="756"/><use href="#gdot" x="495" y="756"/><use href="#g1" x="499" y="756"/></g>
<rect x="471" y="745" width="25" height="13" fill="#000"/>
<g fill="#00ff00"><use href="#g1" x="472" y="747"/><use href="#g5" x="479" y="747"/><use href="#gdot" x="486" y="747"/><use href="#g7" x="490" y="747"/></g>
<rect x="175" y="737" width="25" height="13" fill="#000"/>
<g fill="#00ff00"><use href="#g1" x="176" y="739"/><use href="#g3" x="183" y="739"/><use href="#gdot" x="190" y="739"/><use href="#g1" x="194" y="739"/></g>
<rect x="231" y="751" width="25" height="13" fill="#000"/>
<g fill="#00ff00"><use href="#g1" x="232" y="753"/><use href="#g2" x="239" y="753"/><use href="#gdot" x="246" y="753"/><use href="#g5" x="250" y="753"/></g>
<rect x="61" y="751" width="25" height="13" fill="#000"/>
<g fill="#00ff00"><use href="#g1" x="62" y="753"/><use href="#g3" x="69" y="753"/><use href="#gdot" x="76" y="753"/><use href="#g8" x="80" y="753"/></g>
<rect x="731" y="651" width="25" height="13" fill="#000"/>
<g fill="#00ff00"><use href="#g1" x="732" y="653"/><use href="#g5" x="739" y="653"/><use href="#gdot" x="746" y="653"/><use href="#g1" x="750" y="653"/></g>
<rect x="688" y="744" width="25" height="13" fill="#000"/>
<g fill="#00ff00"><use href="#g1" x="689" y="746"/><use href="#g5" x="696" y="746"/><use href="#gdot" x="703" y="746"/><use href="#g6" x="707" y="746"/></g>
<rect x="740" y="761" width="25" height="13" fill="#000"/>
<g fill="#00ff00"><use href="#g1" x="741" y="763"/><use href="#g6" x="748" y="763"/><use href="#gdot" x="755" y="763"/><use href="#g1" x="759" y="763"/></g>
<rect x="402" y="691" width="25" height="13" fill="#000"/>
<g fill="#00ff00"><use href="#g1" x="403" y="693"/><use href="#g3" x="410" y="693"/><use href="#gdot" x="417" y="693"/><use href="#g6" x="421" y="693"/></g>
<rect x="392" y="719" width="25" height="13" fill="#000"/>
<g fill="#00ff00"><use href="#g1" x="393" y="721"/><use href="#g3" x="400" y="721"/><use href="#gdot" x="407" y="721"/><use href="#g1" x="411" y="721"/></g>
<rect x="371" y="727" width="25" height="13" fill="#000"/>
<g fill="#00ff00"><use href="#g1" x="372" y="729"/><use href="#g2" x="379" y="729"/><use href="#gdot" x="386" y="729"/><use href="#g7" x="390" y="729"/></g>
<rect x="388" y="761" width="25" height="13" fill="#000"/>
<g fill="#00ff00"><use href="#g1" x="389" y="763"/><use href="#g4" x="396" y="763"/><use href="#gdot" x="403" y="763"/><use href="#g3" x="407" y="763"/></g>
<rect x="306" y="699" width="25" height="13" fill="#000"/>
<g fill="#00ff00"><use href="#g1" x="307" y="701"/><use href="#g3" x="314" y="701"/><use href="#gdot" x="321" y="701"/><use href="#g6" x="325" y="701"/></g>
<rect x="352" y="704" width="25" height="13" fill="#000"/>
<g fill="#00ff00"><use href="#g1" x="353" y="706"/><use href="#g2" x="360" y="706"/><use href="#gdot" x="367" y="706"/><use href="#g4" x="371" y="706"/></g>
<rect x="801" y="0" width="25" height="13" fill="#000"/>
<g fill="#00ff00"><use href="#g1" x="802" y="2"/><use href="#g0" x="809" y="2"/><use href="#gdot" x="816" y="2"/><use href="#g2" x="820" y="2"/></g>
<rect x="820" y="25" width="18" height="13" fill="#000"/>
<g fill="#00aaaa"><use href="#g9" x="821" y="27"/><use href="#gdot" x="828" y="27"/><use href="#g5" x="832" y="27"/></g>
<rect x="791" y="32" width="18" height="13" fill="#000"/>
<g fill="#00aaaa"><use href="#g9" x="792" y="34"/><use href="#gdot" x="799" y="34"/><use href="#g7" x="803" y="34"/></g>
<rect x="867" y="45" width="18" height="13" fill="#000"/>
<g fill="#00aaaa"><use href="#g9" x="868" y="47"/><use href="#gdot" x="875" y="47"/><use href="#g5" x="879" y="47"/></g>
<rect x="849" y="57" width="18" height="13" fill="#000"/>
<g fill="#00aaaa"><use href="#g9" x="850" y="59"/><use href="#gdot" x="857" y="59"/><use href="#g0" x="861" y="59"/></g>
<rect x="777" y="78" width="18" height="13" fill="#000"/>
<g fill="#00aaaa"><use href="#g8" x="778" y="80"/><use href="#gdot" x="785" y="80"/><use href="#g8" x="789" y="80"/></g>
<rect x="836" y="90" width="18" height="13" fill="#000"/>
<g fill="#00aaaa"><use href="#g9" x="837" y="92"/><use href="#gdot" x="844" y="92"/><use href="#g0" x="848" y="92"/></g>
<rect x="877" y="93" width="18" height="13" fill="#000"/>
<g fill="#00aaaa"><use href="#g7" x="878" y="95"/><use href="#gdot" x="885" y="95"/><use href="#g0" x="889" y="95"/></g>
<rect x="905" y="11" width="25" height="13" fill="#000"/>
<g fill="#00ff00"><use href="#g1" x="906" y="13"/><use href="#g0" x="913" y="13"/><use href="#gdot" x="920" y="13"/><use href="#g2" x="924" y="13"/></g>
<rect x="991" y="26" width="18" height="13" fill="#000"/>
<g fill="#00ffff"><use href="#g0" x="992" y="28"/><use href="#gdot" x="999" y="28"/><use href="#g5" x="1003" y="28"/></g>
<rect x="931" y="45" width="18" height="13" fill="#000"/>
<g fill="#00ffff"><use href="#g1" x="932" y="47"/><use href="#gdot" x="939" y="47"/><use href="#g2" x="943" y="47"/></g>
<rect x="935" y="79" width="22" height="13" fill="#000"/>
<g fill="#ffffff"><use href="#gmin" x="936" y="81"/><use href="#g2" x="940" y="81"/><use href="#gdot" x="947" y="81"/><use href="#g7" x="951" y="81"/></g>
<rect x="1002" y="85" width="22" height="13" fill="#000"/>
<g fill="#ffffff"><use href="#gmin" x="1003" y="87"/><use href="#g1" x="1007" y="87"/><use href="#gdot" x="1014" y="87"/><use href="#g0" x="1018" y="87"/></g>
<rect x="871" y="120" width="18" height="13" fill="#000"/>
<g fill="#00aaaa"><use href="#g6" x="872" y="122"/><use href="#gdot" x="879" y="122"/><use href="#g2" x="883" y="122"/></g>
<rect x="810" y="133" width="18" height="13" fill="#000"/>
<g fill="#00aaaa"><use href="#g7" x="811" y="135"/><use href="#gdot" x="818" y="135"/><use href="#g7" x="822" y="135"/></g>
<rect x="778" y="162" width="18" height="13" fill="#000"/>
<g fill="#00aaaa"><use href="#g9" x="779" y="164"/><use href="#gdot" x="786" y="164"/><use href="#g3" x="790" y="164"/></g>
<rect x="877" y="168" width="18" height="13" fill="#000"/>
<g fill="#00aaaa"><use href="#g5" x="878" y="170"/><use href="#gdot" x="885" y="170"/><use href="#g8" x="889" y="170"/></g>
<rect x="913" y="127" width="18" height="13" fill="#000"/>
<g fill="#00aaaa"><use href="#g9" x="914" y="129"/><use href="#gdot" x="921" y="129"/><use href="#g0" x="925" y="129"/></g>
<rect x="999" y="145" width="18" height="13" fill="#000"/>
<g fill="#00ffff"><use href="#g0" x="1000" y="147"/><use href="#gdot" x="1007" y="147"/><use href="#g4" x="1011" y="147"/></g>
<rect x="997" y="138" width="18" height="13" fill="#000"/>
<g fill="#00ffff"><use href="#g1" x="998" y="140"/><use href="#gdot" x="1005" y="140"/><use href="#g0" x="1009" y="140"/></g>
<rect x="803" y="206" width="18" height="13" fill="#000"/>
<g fill="#00aaaa"><use href="#g8" x="804" y="208"/><use href="#gdot" x="811" y="208"/><use href="#g0" x="815" y="208"/></g>
<rect x="808" y="198" width="18" height="13" fill="#000"/>
<g fill="#00aaaa"><use href="#g9" x="809" y="200"/><use href="#gdot" x="816" y="200"/><use href="#g3" x="820" y="200"/></g>
<rect x="839" y="198" width="18" height="13" fill="#000"/>
<g fill="#00ffff"><use href="#g3" x="840" y="200"/><use href="#gdot" x="847" y="200"/><use href="#g6" x="851" y="200"/></g>
<rect x="791" y="243" width="25" height="13" fill="#000"/>
<g fill="#00ff00"><use href="#g1" x="792" y="245"/><use href="#g0" x="799" y="245"/><use href="#gdot" x="806" y="245"/><use href="#g8" x="810" y="245"/></g>
<rect x="913" y="176" width="22" height="13" fill="#000"/>
<g fill="#ffffff"><use href="#gmin" x="914" y="178"/><use href="#g0" x="918" y="178"/><use href="#gdot" x="925" y="178"/><use href="#g1" x="929" y="178"/></g>
<rect x="947" y="183" width="18" height="13" fill="#000"/>
<g fill="#00ffff"><use href="#g0" x="948" y="185"/><use href="#gdot" x="955" y="185"/><use href="#g7" x="959" y="185"/></g>
<rect x="993" y="180" width="18" height="13" fill="#000"/>
<g fill="#00ffff"><use href="#g1" x="994" y="182"/><use href="#gdot" x="1001" y="182"/><use href="#g3" x="1005" y="182"/></g>
<rect x="913" y="199" width="18" height="13" fill="#000"/>
<g fill="#00ffff"><use href="#g1" x="914" y="201"/><use href="#gdot" x="921" y="201"/><use href="#g5" x="925" y="201"/></g>
<rect x="993" y="230" width="18" height="13" fill="#000"/>
<g fill="#00ffff"><use href="#g2" x="994" y="232"/><use href="#gdot" x="1001" y="232"/><use href="#g2" x="1005" y="232"/></g>
<rect x="946" y="251" width="18" height="13" fill="#000"/>
<g fill="#00ffff"><use href="#g3" x="947" y="253"/><use href="#gdot" x="954" y="253"/><use href="#g1" x="958" y="253"/></g>
<rect x="888" y="251" width="18" height="13" fill="#000"/>
<g fill="#00aaaa"><use href="#g5" x="889" y="253"/><use href="#gdot" x="896" y="253"/><use href="#g5" x="900" y="253"/></g>
<rect x="907" y="258" width="18" height="13" fill="#000"/>
<g fill="#00ffff"><use href="#g2" x="908" y="260"/><use href="#gdot" x="915" y="260"/><use href="#g2" x="919" y="260"/></g>
<rect x="858" y="269" width="18" height="13" fill="#000"/>
<g fill="#00aaaa"><use href="#g7" x="859" y="271"/><use href="#gdot" x="866" y="271"/><use href="#g0" x="870" y="271"/></g>
<rect x="825" y="285" width="25" height="13" fill="#000"/>
<g fill="#00ff00"><use href="#g1" x="826" y="287"/><use href="#g0" x="833" y="287"/><use href="#gdot" x="840" y="287"/><use href="#g1" x="844" y="287"/></g>
<rect x="782" y="302" width="25" height="13" fill="#000"/>
<g fill="#00ff00"><use href="#g1" x="783" y="304"/><use href="#g2" x="790" y="304"/><use href="#gdot" x="797" y="304"/><use href="#g0" x="801" y="304"/></g>
<rect x="838" y="315" width="25" height="13" fill="#000"/>
<g fill="#00ff00"><use href="#g1" x="839" y="317"/><use href="#g0" x="846" y="317"/><use href="#gdot" x="853" y="317"/><use href="#g1" x="857" y="317"/></g>
<rect x="823" y="335" width="25" height="13" fill="#000"/>
<g fill="#00ff00"><use href="#g1" x="824" y="337"/><use href="#g1" x="831" y="337"/><use href="#gdot" x="838" y="337"/><use href="#g7" x="842" y="337"/></g>
<rect x="808" y="324" width="25" height="13" fill="#000"/>
<g fill="#00ff00"><use href="#g1" x="809" y="326"/><use href="#g2" x="816" y="326"/><use href="#gdot" x="823" y="326"/><use href="#g8" x="827" y="326"/></g>
<rect x="820" y="343" width="25" height="13" fill="#000"/>
<g fill="#00ff00"><use href="#g1" x="821" y="345"/><use href="#g3" x="828" y="345"/><use href="#gdot" x="835" y="345"/><use href="#g3" x="839" y="345"/></g>
<rect x="885" y="337" width="18" height="13" fill="#000"/>
<g fill="#00aaaa"><use href="#g5" x="886" y="339"/><use href="#gdot" x="893" y="339"/><use href="#g8" x="897" y="339"/></g>
<rect x="907" y="275" width="18" height="13" fill="#000"/>
<g fill="#00ffff"><use href="#g3" x="908" y="277"/><use href="#gdot" x="915" y="277"/><use href="#g1" x="919" y="277"/></g>
<rect x="947" y="283" width="18" height="13" fill="#000"/>
<g fill="#00ffff"><use href="#g3" x="948" y="285"/><use href="#gdot" x="955" y="285"/><use href="#g7" x="959" y="285"/></g>
<rect x="995" y="294" width="18" height="13" fill="#000"/>
<g fill="#00ffff"><use href="#g4" x="996" y="296"/><use href="#gdot" x="1003" y="296"/><use href="#g5" x="1007" y="296"/></g>
<rect x="962" y="327" width="18" height="13" fill="#000"/>
<g fill="#00aaaa"><use href="#g8" x="963" y="329"/><use href="#gdot" x="970" y="329"/><use href="#g9" x="974" y="329"/></g>
<rect x="1008" y="345" width="25" height="13" fill="#000"/>
<g fill="#00ff00"><use href="#g1" x="1009" y="347"/><use href="#g3" x="1016" y="347"/><use href="#gdot" x="1023" y="347"/><use href="#g7" x="1027" y="347"/></g>
<rect x="815" y="363" width="25" height="13" fill="#000"/>
<g fill="#00ff00"><use href="#g1" x="816" y="365"/><use href="#g2" x="823" y="365"/><use href="#gdot" x="830" y="365"/><use href="#g9" x="834" y="365"/></g>
<rect x="861" y="376" width="25" height="13" fill="#000"/>
<g fill="#00ff00"><use href="#g1" x="862" y="378"/><use href="#g0" x="869" y="378"/><use href="#gdot" x="876" y="378"/><use href="#g9" x="880" y="378"/></g>
<rect x="864" y="414" width="25" height="13" fill="#000"/>
<g fill="#00ff00"><use href="#g1" x="865" y="416"/><use href="#g3" x="872" y="416"/><use href="#gdot" x="879" y="416"/><use href="#g7" x="883" y="416"/></g>
<rect x="928" y="362" width="18" height="13" fill="#000"/>
<g fill="#00aaaa"><use href="#g8" x="929" y="364"/><use href="#gdot" x="936" y="364"/><use href="#g0" x="940" y="364"/></g>
<rect x="989" y="365" width="25" height="13" fill="#000"/>
<g fill="#00ff00"><use href="#g1" x="990" y="367"/><use href="#g3" x="997" y="367"/><use href="#gdot" x="1004" y="367"/><use href="#g0" x="1008" y="367"/></g>
<rect x="972" y="386" width="25" height="13" fill="#000"/>
<g fill="#00ff00"><use href="#g1" x="973" y="388"/><use href="#g3" x="980" y="388"/><use href="#gdot" x="987" y="388"/><use href="#g8" x="991" y="388"/></g>
<rect x="900" y="400" width="25" height="13" fill="#000"/>
<g fill="#00ff00"><use href="#g1" x="901" y="402"/><use href="#g0" x="908" y="402"/><use href="#gdot" x="915" y="402"/><use href="#g4" x="919" y="402"/></g>
<rect x="937" y="405" width="25" height="13" fill="#000"/>
<g fill="#00ff00"><use href="#g1" x="938" y="407"/><use href="#g3" x="945" y="407"/><use href="#gdot" x="952" y="407"/><use href="#g7" x="956" y="407"/></g>
<rect x="907" y="419" width="25" height="13" fill="#000"/>
<g fill="#00ff00"><use href="#g1" x="908" y="421"/><use href="#g3" x="915" y="421"/><use href="#gdot" x="922" y="421"/><use href="#g0" x="926" y="421"/></g>
<rect x="987" y="575" width="25" height="13" fill="#000"/>
<g fill="#00ff00"><use href="#g1" x="988" y="577"/><use href="#g4" x="995" y="577"/><use href="#gdot" x="1002" y="577"/><use href="#g8" x="1006" y="577"/></g>
<rect x="953" y="685" width="25" height="13" fill="#000"/>
<g fill="#00ff00"><use href="#g1" x="954" y="687"/><use href="#g5" x="961" y="687"/><use href="#gdot" x="968" y="687"/><use href="#g7" x="972" y="687"/></g>
<rect x="1006" y="701" width="25" height="13" fill="#000"/>
<g fill="#00ff00"><use href="#g1" x="1007" y="703"/><use href="#g3" x="1014" y="703"/><use href="#gdot" x="1021" y="703"/><use href="#g7" x="1025" y="703"/></g>
<rect x="962" y="743" width="25" height="13" fill="#000"/>
<g fill="#00ff00"><use href="#g1" x="963" y="745"/><use href="#g4" x="970" y="745"/><use href="#gdot" x="977" y="745"/><use href="#g9" x="981" y="745"/></g>
<rect x="1007" y="732" width="25" height="13" fill="#000"/>
<g fill="#00ff00"><use href="#g1" x="1008" y="734"/><use href="#g4" x="1015" y="734"/><use href="#gdot" x="1022" y="734"/><use href="#g5" x="1026" y="734"/></g>
<rect x="1007" y="743" width="25" height="13" fill="#000"/>
<g fill="#00ff00"><use href="#g1" x="1008" y="745"/><use href="#g4" x="1015" y="745"/><use href="#gdot" x="1022" y="745"/><use href="#g1" x="1026" y="745"/></g>
<rect x="906" y="755" width="25" height="13" fill="#000"/>
<g fill="#00ff00"><use href="#g1" x="907" y="757"/><use href="#g6" x="914" y="757"/><use href="#gdot" x="921" y="757"/><use href="#g1" x="925" y="757"/></g>
<rect x="852" y="687" width="25" height="13" fill="#000"/>
<g fill="#00ff00"><use href="#g1" x="853" y="689"/><use href="#g5" x="860" y="689"/><use href="#gdot" x="867" y="689"/><use href="#g8" x="871" y="689"/></g>
<rect x="853" y="756" width="25" height="13" fill="#000"/>
<g fill="#00ff00"><use href="#g1" x="854" y="758"/><use href="#g6" x="861" y="758"/><use href="#gdot" x="868" y="758"/><use href="#g5" x="872" y="758"/></g>
</svg></body></html>
